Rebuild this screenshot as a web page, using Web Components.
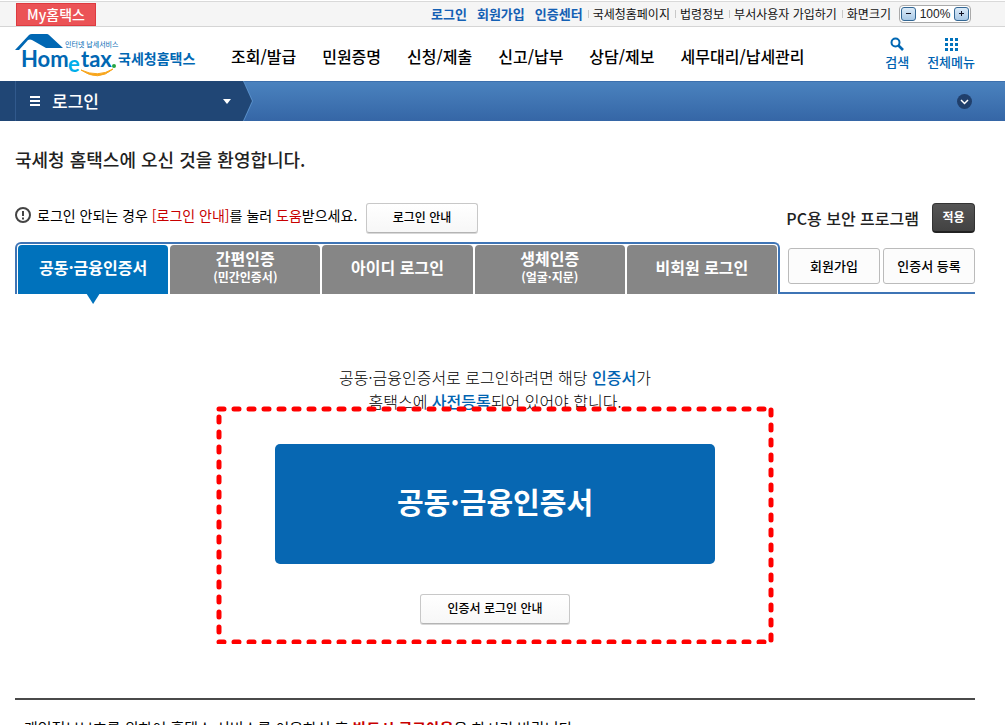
<!DOCTYPE html>
<html lang="ko">
<head>
<meta charset="utf-8">
<title>국세청 홈택스 - 로그인</title>
<style>
  body {
    margin: 0;
    background: #fff;
    color: #000;
    font-family: "Noto Sans CJK KR", "Noto Sans", sans-serif;
    --left: 15px;
    --right: 30px;
    --blue: #0767b2;
    --line: #3e74b5;
    --red: #c80000;
  }
</style>
</head>
<body>
<hometax-page></hometax-page>
<script>
const define = (name, html) => {
  const template = document.createElement('template');
  template.innerHTML = html;
  customElements.define(name, class extends HTMLElement {
    constructor() {
      super();
      this.attachShadow({ mode: 'open' }).append(template.content.cloneNode(true));
    }
  });
};

define('soft-button', `
<style>
  :host { display: block; }
  button {
    box-sizing: border-box; width: 100%; height: var(--height, 30px); padding: 0 0 2px;
    border: 1px solid #c8c8c8; border-bottom-color: #b4b4b4; border-radius: 3px;
    background: linear-gradient(#fff, #f7f7f7); box-shadow: 0 1px 0 #d8d8d8;
    color: #000; font: 500 12px/16px "Noto Sans CJK KR", sans-serif; cursor: pointer; white-space: nowrap;
  }
  :host([flat]) button { padding: 0; border-color: #bbb; box-shadow: none; background: #fcfcfc; font-size: 13px; }
  :host([dark]) button { border: 1px solid #333; border-bottom: 2px solid #222; background: linear-gradient(#555, #424242); box-shadow: none; color: #fff; font-weight: 700; border-radius: 4px; }
</style>
<button type="button"><slot></slot></button>`);

define('screen-size', `
<style>
  :host {
    display: flex; align-items: center; justify-content: space-between; box-sizing: border-box;
    width: 72px; height: 18px; padding: 0 1px; border: 1px solid #aaa; border-radius: 4px; background: #fff;
    font-size: 12px; line-height: 14px;
  }
  button { width: 15px; height: 14px; padding: 0; border: 1px solid #336794; border-radius: 3px; background: linear-gradient(#dcebf8, #a9c9e6); display: grid; place-items: center; }
  output { font-family: "Liberation Sans", sans-serif; font-size: 12px; color: #222; }
</style>
<button type="button" aria-label="축소"><svg width="7" height="7"><path d="M1 3.5h5" stroke="#112"/></svg></button>
<output>100%</output>
<button type="button" aria-label="확대"><svg width="7" height="7"><path d="M1 3.5h5M3.5 1v5" stroke="#112"/></svg></button>`);

define('top-bar', `
<style>
  :host { display: flex; box-sizing: border-box; height: 27px; padding: 1px 34px 0 16px; border-bottom: 1px solid #d5d5d5; background: linear-gradient(#fff 1px, #d9d9d9 1px 2px, #f5f5f5 2px); align-items: center; justify-content: space-between; }
  a { color: #111; text-decoration: none; white-space: nowrap; }
  .my { box-sizing: border-box; width: 80px; height: 23px; margin-top: 2px; border: 1px solid #dd3a40; background: #eb5356; color: #fff; font-size: 14px; line-height: 21px; font-weight: 500; text-align: center; }
  nav { display: flex; align-items: center; font-size: 12px; line-height: 16px; }
  .main { color: #1460b4; font-size: 13px; font-weight: 700; margin-right: 10px; }
  .main.last { margin-right: 5px; }
  .sub { display: flex; align-items: center; }
  .sub::before { content: ""; width: 1px; height: 8px; margin-right: 4px; background: #c8c8c8; }
  .sub + .sub { margin-left: 5px; }
  screen-size { margin-left: 8px; }
</style>
<a class="my" href="#">My홈택스</a>
<nav>
  <a class="main" href="#">로그인</a><a class="main" href="#">회원가입</a><a class="main last" href="#">인증센터</a>
  <a class="sub" href="#">국세청홈페이지</a><a class="sub" href="#">법령정보</a><a class="sub" href="#">부서사용자 가입하기</a><a class="sub" href="#">화면크기</a>
  <screen-size></screen-size>
</nav>`);

define('hometax-logo', `
<style>
  :host { display: block; }
  a, svg { display: block; }
  text { font-family: "Noto Sans CJK KR", sans-serif; fill: #0067b3; font-weight: 700; }
  .latin { font-family: Lato, sans-serif; font-size: 22px; }
</style>
<a href="#" aria-label="홈택스 처음으로">
<svg width="182" height="50" viewBox="0 0 182 50">
  <path d="M0 19 14 4Q15 3 17 3H32Q33 3 34 4L48 17H31L17 9Q15 8 13 9L4 19Z" fill="#0067b3"/>
  <path d="M66 39Q83 51 98 38Q83 47 66 39Z" fill="#f8a51b" stroke="#f8a51b"/>
  <text x="50" y="16" style="font-size:7px;font-weight:400">인터넷 납세서비스</text>
  <text class="latin" x="6" y="36">Hom</text>
  <text class="latin" x="53" y="41" style="fill:#00aeea">e</text>
  <text class="latin" x="66" y="36">tax</text>
  <circle cx="99" cy="35" r="2" fill="#26a641"/>
  <text x="103" y="33" style="font-size:14px">국세청홈택스</text>
</svg></a>`);

define('main-header', `
<style>
  :host { display: flex; height: 54px; padding: 0 var(--right) 0 var(--left); align-items: center; }
  hometax-logo { width: 216px; flex: none; align-self: start; margin-top: 4px; }
  nav { display: flex; gap: 26px; flex: 1; padding-top: 4px; }
  nav a { color: #000; font-size: 16px; line-height: 24px; font-weight: 500; }
  a { text-decoration: none; white-space: nowrap; }
  .tools { display: flex; gap: 18px; }
  .tools a { display: grid; justify-items: center; gap: 2px; color: #0063b1; font-size: 13px; line-height: 18px; font-weight: 500; }
</style>
<hometax-logo></hometax-logo>
<nav><a href="#">조회/발급</a><a href="#">민원증명</a><a href="#">신청/제출</a><a href="#">신고/납부</a><a href="#">상담/제보</a><a href="#">세무대리/납세관리</a></nav>
<div class="tools">
  <a href="#"><svg width="14" height="14" fill="none" stroke="#0067b3"><circle cx="5.5" cy="5.5" r="4" stroke-width="2"/><path d="m8.5 8.5 4.5 4.5" stroke-width="2.6"/></svg>검색</a>
  <a href="#"><svg width="14" height="14" fill="#0072bc"><path d="M1 1h3v3H1zM6 1h3v3H6zM11 1h3v3h-3zM1 6h3v3H1zM6 6h3v3H6zM11 6h3v3h-3zM1 11h3v3H1zM6 11h3v3H6zM11 11h3v3h-3z"/></svg>전체메뉴</a>
</div>`);

define('location-bar', `
<style>
  :host { display: flex; height: 40px; background: linear-gradient(#4b83bf, #3566a6); justify-content: space-between; align-items: center; padding-right: 33px; box-shadow: inset 0 1px 0 #3d70ad; }
  .menu { display: flex; align-items: center; box-sizing: border-box; width: 253px; height: 40px; padding: 0 21px 0 0; border: 0; color: #fff; background: #5a91cb; clip-path: polygon(0 0, 244px 0, 253px 20px, 244px 100%, 0 100%); position: relative; isolation: isolate; font: 500 17px/24px "Noto Sans CJK KR", sans-serif; }
  .menu::before { content: ""; position: absolute; inset: 0; z-index: -1; background: linear-gradient(90deg, #204675 15px, #31598c 15px 16px, #204675 16px); clip-path: polygon(0 0, 243px 0, 252px 20px, 243px 100%, 0 100%); }
  .bars { margin: 0 12px 0 30px; }
  .arrow { margin-left: auto; }
  .open { padding: 0; border: 0; background: none; display: block; height: 15px; }
</style>
<button class="menu" type="button">
  <svg class="bars" width="10" height="10"><path d="M0 1h10M0 5h10M0 9h10" stroke="#fff" stroke-width="2"/></svg>로그인
  <svg class="arrow" width="10" height="5"><path d="M1 0h8L5 5z" fill="#fff"/></svg>
</button>
<button class="open" type="button" aria-label="펼치기"><svg width="15" height="15"><circle cx="7.5" cy="7.5" r="7.5" fill="#203f6b"/><path d="m4 6 3.5 3.5L11 6" fill="none" stroke="#fff" stroke-width="1.5"/></svg></button>`);

define('login-tab', `
<style>
  :host { display: block; flex: 1; min-width: 0; position: relative; }
  button { display: flex; flex-direction: column; align-items: center; justify-content: center; gap: 2px; width: 100%; height: 49px; padding: 0 0 6px; border: 0; border-radius: 4px 4px 0 0; background: #868686; color: #fff; font: 700 16px/18px "Noto Sans CJK KR", sans-serif; white-space: nowrap; }
  ::slotted(small) { font-size: 12px; line-height: 16px; }
  :host([selected]) button { background: #0072bc; }
  :host([selected])::after { content: ""; position: absolute; top: 48px; left: calc(50% - 7px); width: 14px; height: 11px; background: #0072bc; clip-path: polygon(0 0, 100% 0, 50% 100%); }
</style>
<button type="button"><span><slot></slot></span><slot name="note"></slot></button>`);

define('login-tabs', `
<style>
  :host { display: flex; height: 52px; }
  .tabs { flex: 1; display: flex; gap: 2px; box-sizing: border-box; padding: 1px 1px 0; border: 2px solid var(--line); border-bottom: 0; border-radius: 6px 6px 0 0; }
  .extra { width: 195px; box-sizing: border-box; display: flex; gap: 3px; padding: 6px 0 0 8px; border-bottom: 2px solid var(--line); }
  soft-button { flex: 1; --height: 36px; }
</style>
<div class="tabs">
  <login-tab selected>공동·금융인증서</login-tab>
  <login-tab>간편인증<small slot="note">(민간인증서)</small></login-tab>
  <login-tab>아이디 로그인</login-tab>
  <login-tab>생체인증<small slot="note">(얼굴·지문)</small></login-tab>
  <login-tab>비회원 로그인</login-tab>
</div>
<div class="extra"><soft-button flat>회원가입</soft-button><soft-button flat>인증서 등록</soft-button></div>`);

define('login-notice', `
<style>
  :host { display: flex; align-items: center; height: 30px; }
  p { margin: 0; width: 329px; padding-left: 6px; font-size: 14px; line-height: 20px; margin-top: -6px; white-space: nowrap; }
  em { font-style: normal; color: var(--red); }
  svg { margin-top: -6px; flex: none; }
  .guide { width: 112px; }
  .pc { margin-left: auto; margin-right: 13px; font-size: 16px; line-height: 24px; font-weight: 500; color: #222; }
  .apply { width: 43px; }
</style>
<svg width="16" height="16"><circle cx="8" cy="8" r="7" fill="none" stroke="#444" stroke-width="2"/><path d="M8 4v5M8 10.5v2" stroke="#444" stroke-width="2"/></svg>
<p>로그인 안되는 경우 <em>[로그인 안내]</em>를 눌러 <em>도움</em>받으세요.</p>
<soft-button class="guide">로그인 안내</soft-button>
<span class="pc">PC용 보안 프로그램</span>
<soft-button class="apply" dark>적용</soft-button>`);

define('marked-area', `
<style>
  :host { display: flex; flex-direction: column; align-items: center; position: relative; box-sizing: border-box; width: 558px; padding: 38px 0 20px; }
  svg { position: absolute; inset: 0; width: 100%; height: 100%; pointer-events: none; }
  path { fill: none; stroke: red; stroke-width: 5; stroke-linecap: round; stroke-dasharray: 5 10; }
</style>
<slot></slot>
<svg viewBox="0 0 558 238" aria-hidden="true"><path d="M3 3H550M555 4V235M3 236H550M3 11V230"/></svg>`);

define('certificate-login', `
<style>
  :host { display: flex; flex-direction: column; align-items: center; padding-top: 71px; }
  p { margin: 0 0 -7px; text-align: center; font-size: 16px; line-height: 24px; font-weight: 300; }
  b { color: #0063b1; font-weight: 500; }
  .login { width: 440px; height: 120px; margin-bottom: 30px; padding: 0 0 6px; border: 0; border-radius: 5px; background: var(--blue); color: #fff; font: 700 29px/40px "Noto Sans CJK KR", sans-serif; }
  soft-button { width: 150px; }
</style>
<p>공동·금융인증서로 로그인하려면 해당 <b>인증서</b>가<br>홈택스에 <b>사전등록</b>되어 있어야 합니다.</p>
<marked-area>
  <button class="login" type="button">공동·금융인증서</button>
  <soft-button>인증서 로그인 안내</soft-button>
</marked-area>`);

define('hometax-page', `
<style>
  :host { display: block; }
  main { padding: 0 var(--right) 0 var(--left); }
  h1 { margin: 0; padding: 24px 0 30px; font-size: 18px; line-height: 28px; font-weight: 500; color: #222; }
  login-tabs { margin-top: 9px; }
  footer { margin-top: 54px; padding: 16px 9px 0; border-top: 2px solid #4a4a4a; font-size: 15px; line-height: 24px; }
  footer p { margin: 0; }
  strong { color: var(--red); }
</style>
<top-bar></top-bar>
<main-header></main-header>
<location-bar></location-bar>
<main>
  <h1>국세청 홈택스에 오신 것을 환영합니다.</h1>
  <login-notice></login-notice>
  <login-tabs></login-tabs>
  <certificate-login></certificate-login>
  <footer><p>개인정보보호를 위하여 홈택스 서비스를 이용하신 후 <strong>반드시 로그아웃</strong>을 하시기 바랍니다.</p></footer>
</main>`);
</script>
</body>
</html>
